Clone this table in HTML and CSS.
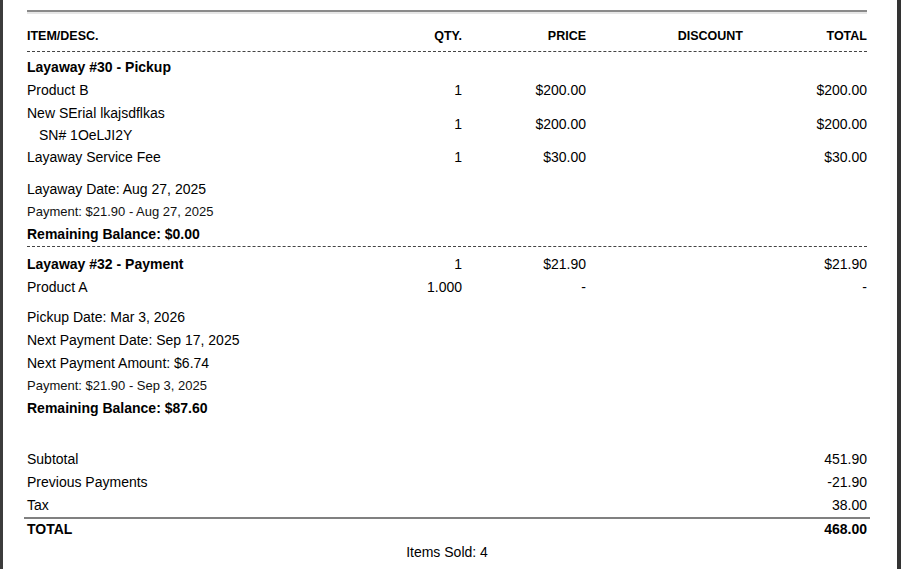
FILE: index.html
```html
<!DOCTYPE html>
<html>
<head>
<meta charset="utf-8">
<link rel="stylesheet" href="styles.css">
</head>
<body>
<div class="viewer">
  <div class="page">
    <div class="topline"></div>
    <div class="row head">
      <span class="c-item">ITEM/DESC.</span>
      <span class="num">QTY.</span>
      <span class="num">PRICE</span>
      <span class="num">DISCOUNT</span>
      <span class="num">TOTAL</span>
    </div>

    <div class="section first">
      <div class="row bold">
        <span>Layaway #30 - Pickup</span><span></span><span></span><span></span><span></span>
      </div>
      <div class="row">
        <span>Product B</span><span class="num">1</span><span class="num">$200.00</span><span class="num"></span><span class="num">$200.00</span>
      </div>
      <div class="row multi">
        <span class="lines"><span class="line">New SErial lkajsdflkas</span><span class="line sn">SN# 1OeLJI2Y</span></span>
        <span class="num">1</span><span class="num">$200.00</span><span class="num"></span><span class="num">$200.00</span>
      </div>
      <div class="row">
        <span>Layaway Service Fee</span><span class="num">1</span><span class="num">$30.00</span><span class="num"></span><span class="num">$30.00</span>
      </div>
      <div class="info info-1">
        <div class="info-line">Layaway Date: Aug 27, 2025</div>
        <div class="info-line small">Payment: $21.90 - Aug 27, 2025</div>
        <div class="info-line bold">Remaining Balance: $0.00</div>
      </div>
    </div>

    <div class="section second">
      <div class="row bold">
        <span>Layaway #32 - Payment</span><span class="num normal">1</span><span class="num normal">$21.90</span><span class="num"></span><span class="num normal">$21.90</span>
      </div>
      <div class="row">
        <span>Product A</span><span class="num">1.000</span><span class="num">-</span><span class="num"></span><span class="num">-</span>
      </div>
      <div class="info info-2">
        <div class="info-line">Pickup Date: Mar 3, 2026</div>
        <div class="info-line">Next Payment Date: Sep 17, 2025</div>
        <div class="info-line">Next Payment Amount: $6.74</div>
        <div class="info-line small">Payment: $21.90 - Sep 3, 2025</div>
        <div class="info-line bold">Remaining Balance: $87.60</div>
      </div>
    </div>

    <div class="totals">
      <div class="trow"><span>Subtotal</span><span>451.90</span></div>
      <div class="trow"><span>Previous Payments</span><span>-21.90</span></div>
      <div class="trow"><span>Tax</span><span>38.00</span></div>
      <div class="trow grand"><span>TOTAL</span><span>468.00</span></div>
    </div>

    <div class="sold">Items Sold: 4</div>
  </div>
</div>
</body>
</html>
```

FILE: styles.css
```css
html, body {
  margin: 0;
  padding: 0;
  background: #ffffff;
}

body {
  font-family: "Liberation Sans", Arial, Helvetica, sans-serif;
  color: #000;
  height: 569px;
  overflow: hidden;
}

.viewer {
  display: flex;
  min-height: 569px;
  border-left: 3px solid #3c3c3c;
  border-right: 4px solid #333333;
  box-sizing: border-box;
  background: #fff;
}

.page {
  flex: 1;
  padding: 10px 30px 0 24px;
}

.topline {
  height: 2px;
  background: #8a8a8a;
  border-bottom: 2px solid #e6e6e6;
}

.row {
  display: grid;
  grid-template-columns: 335px 100px 124px 157px 124px;
  align-items: center;
  font-size: 14px;
  line-height: 23px;
}

.num {
  text-align: right;
}

.head {
  font-size: 12.5px;
  font-weight: bold;
  line-height: 16px;
  padding: 14px 0 7px;
  border-bottom: 1px dashed #444;
}

.bold {
  font-weight: bold;
}

.normal {
  font-weight: normal;
}

.section.first {
  padding-top: 4px;
  padding-bottom: 0;
  border-bottom: 1px dashed #444;
}

.section.second {
  padding-top: 6px;
}

.lines {
  display: flex;
  flex-direction: column;
}

.line {
  line-height: 22px;
}

.sn {
  padding-left: 12px;
}

.info {
  font-size: 14px;
  line-height: 23px;
}

.info-1 {
  margin-top: 9px;
}

.info-2 {
  margin-top: 7px;
}

.info-line.small {
  font-size: 13px;
  line-height: 22px;
  color: #111;
}

.totals {
  margin-top: 28px;
  font-size: 14px;
}

.trow {
  display: flex;
  justify-content: space-between;
  line-height: 23px;
}

.trow.grand {
  font-weight: bold;
  line-height: 20px;
  margin: 0 -3px;
  padding: 0 3px;
  border-top: 2px solid #808080;
}

.sold {
  text-align: center;
  font-size: 14px;
  line-height: 20px;
  margin-top: 3px;
}
```
